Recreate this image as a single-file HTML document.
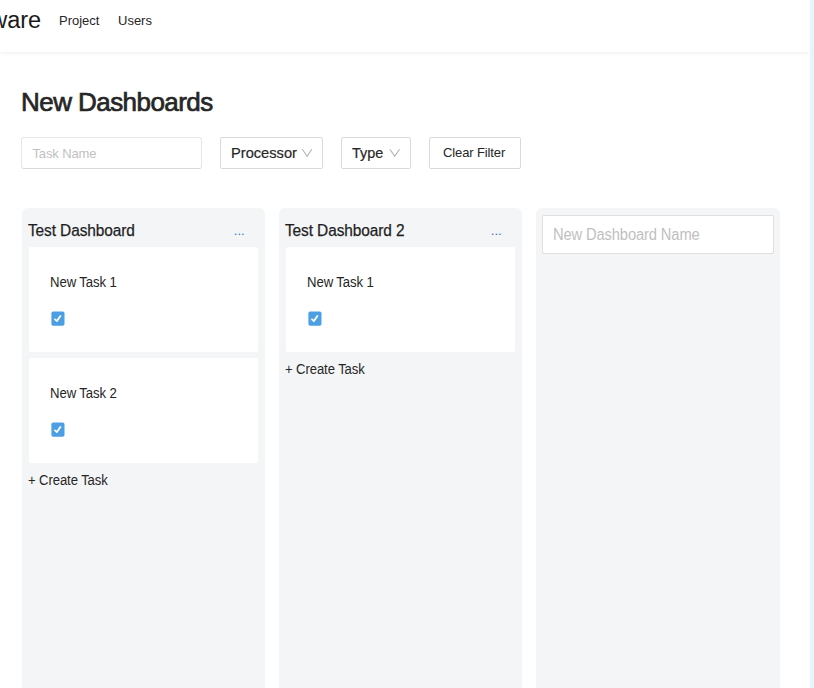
<!DOCTYPE html>
<html>
<head>
<meta charset="utf-8">
<style>
*{box-sizing:border-box;}
html,body{margin:0;padding:0;}
body{width:814px;height:688px;overflow:hidden;background:#fff;font-family:"Liberation Sans",sans-serif;color:#262626;position:relative;}
.header{position:absolute;left:0;top:0;width:810px;height:52px;background:#fff;box-shadow:0 0 5px 0 rgba(0,0,0,0.1);}
.strip{position:absolute;left:810px;top:0;width:4px;height:688px;background:#e6f4ff;}
.logo{position:absolute;left:-9.8px;top:4px;font-size:23.5px;line-height:32px;color:#1a1a1a;white-space:nowrap;}
.nav{position:absolute;top:13px;font-size:13px;line-height:16px;color:#262626;white-space:nowrap;}
h1{position:absolute;left:21px;top:85px;margin:0;font-size:26px;line-height:34px;font-weight:normal;color:#262626;letter-spacing:-0.55px;-webkit-text-stroke:0.7px #262626;white-space:nowrap;}
.inp{position:absolute;background:#fff;border:1px solid #dadada;border-radius:2px;}
.inp span{position:absolute;white-space:nowrap;}
.ph{color:#bfbfbf;}
.sel{font-size:15.5px;line-height:18px;transform-origin:0 0;-webkit-text-stroke:0.2px #262626;}
.col{position:absolute;top:208px;width:243px;height:500px;background:#f4f5f7;border-radius:6px;}
.col h3{position:absolute;left:6px;top:13.3px;margin:0;font-size:16px;line-height:20px;font-weight:normal;color:#1f1f1f;letter-spacing:-0.1px;transform:scaleX(0.965);transform-origin:0 0;-webkit-text-stroke:0.25px #1f1f1f;white-space:nowrap;}
.dots{position:absolute;left:211.8px;top:14.9px;font-size:13px;line-height:16px;color:#3a6fd8;}
.card{position:absolute;left:7px;width:229px;height:105px;background:#fff;border-radius:2px;}
.card .t{position:absolute;left:21px;top:27.4px;font-size:14px;line-height:16px;color:#262626;letter-spacing:-0.1px;transform:scaleX(0.94);transform-origin:0 0;white-space:nowrap;}
.cb{position:absolute;left:21px;top:64px;width:16px;height:16px;}
.create{position:absolute;left:6px;font-size:14px;line-height:16px;color:#262626;letter-spacing:-0.1px;transform:scaleX(0.935);transform-origin:0 0;white-space:nowrap;}
</style>
</head>
<body>
<div class="header">
  <div class="logo">ware</div>
  <div class="nav" style="left:59px;">Project</div>
  <div class="nav" style="left:118px;">Users</div>
</div>
<div class="strip"></div>
<h1>New Dashboards</h1>

<div class="inp" style="left:21px;top:137px;width:181px;height:32px;border-color:#e6e6e6;border-bottom-color:#dadada;border-radius:3px;"><span class="ph" style="left:10.4px;top:8px;font-size:13px;line-height:16px;letter-spacing:-0.12px;">Task Name</span></div>
<div class="inp" style="left:220px;top:137px;width:103px;height:32px;"><span class="sel" style="left:9.6px;top:6px;transform:scaleX(0.945);">Processor</span>
<svg style="position:absolute;left:80px;top:10px" width="13" height="12" viewBox="0 0 13 12"><path d="M1.3 1.3 L6.1 8.3 L10.9 1.3" fill="none" stroke="#b2b2b2" stroke-width="1.05"/></svg></div>
<div class="inp" style="left:341px;top:137px;width:70px;height:32px;"><span class="sel" style="left:10.3px;top:6px;transform:scaleX(0.93);">Type</span>
<svg style="position:absolute;left:46px;top:10px" width="13" height="12" viewBox="0 0 13 12"><path d="M1.9 1.3 L6.7 8.3 L11.5 1.3" fill="none" stroke="#b2b2b2" stroke-width="1.05"/></svg></div>
<div class="inp" style="left:429px;top:137px;width:92px;height:32px;"><span style="left:13px;top:7px;font-size:13px;line-height:16px;letter-spacing:-0.12px;">Clear Filter</span></div>

<div class="col" style="left:22px;">
  <h3>Test Dashboard</h3>
  <div class="dots">...</div>
  <div class="card" style="top:39px;"><div class="t">New Task 1</div><svg class="cb" viewBox="0 0 16 16"><rect x="1.4" y="0.5" width="13.1" height="14.3" rx="1.8" fill="#4c9fe3"/><path d="M5 8.4 L6.9 10.1 L10.4 5" fill="none" stroke="#fff" stroke-width="1.8" stroke-linecap="round" stroke-linejoin="round"/></svg></div>
  <div class="card" style="top:150px;"><div class="t">New Task 2</div><svg class="cb" viewBox="0 0 16 16"><rect x="1.4" y="0.5" width="13.1" height="14.3" rx="1.8" fill="#4c9fe3"/><path d="M5 8.4 L6.9 10.1 L10.4 5" fill="none" stroke="#fff" stroke-width="1.8" stroke-linecap="round" stroke-linejoin="round"/></svg></div>
  <div class="create" style="top:264px;">+ Create Task</div>
</div>

<div class="col" style="left:279px;">
  <h3>Test Dashboard 2</h3>
  <div class="dots">...</div>
  <div class="card" style="top:39px;"><div class="t">New Task 1</div><svg class="cb" viewBox="0 0 16 16"><rect x="1.4" y="0.5" width="13.1" height="14.3" rx="1.8" fill="#4c9fe3"/><path d="M5 8.4 L6.9 10.1 L10.4 5" fill="none" stroke="#fff" stroke-width="1.8" stroke-linecap="round" stroke-linejoin="round"/></svg></div>
  <div class="create" style="top:153px;">+ Create Task</div>
</div>

<div class="col" style="left:536px;width:244px;">
  <div class="inp" style="left:6px;top:7px;width:232px;height:39px;border-color:#e0e0e0;"><span class="ph" style="left:10px;top:9px;font-size:16px;line-height:18px;letter-spacing:-0.15px;transform:translateY(0.5px) scaleX(0.921);transform-origin:0 0;">New Dashboard Name</span></div>
</div>
</body>
</html>
